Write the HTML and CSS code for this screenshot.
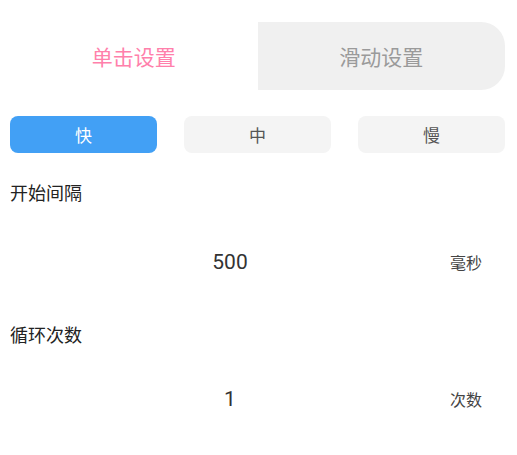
FILE: index.html
```html
<!DOCTYPE html>
<html lang="zh-CN">
<head>
<meta charset="utf-8">
<title>设置</title>
<link rel="stylesheet" href="styles.css">
</head>
<body>
<div class="page">
  <div class="tabs">
    <div class="tab tab-active">单击设置</div>
    <div class="tab tab-inactive">滑动设置</div>
  </div>
  <div class="speeds">
    <div class="speed speed-on">快</div>
    <div class="speed">中</div>
    <div class="speed">慢</div>
  </div>
  <div class="group group-first">
    <div class="label">开始间隔</div>
    <div class="value-row value-row-first">
      <div class="value">500</div>
      <div class="unit">毫秒</div>
    </div>
  </div>
  <div class="group group-second">
    <div class="label">循环次数</div>
    <div class="value-row value-row-second">
      <div class="value">1</div>
      <div class="unit">次数</div>
    </div>
  </div>
</div>
</body>
</html>
```
FILE: styles.css
```css
html, body {
  margin: 0;
  padding: 0;
  background: #ffffff;
}
body {
  font-family: "Noto Sans CJK SC", "Noto Sans", sans-serif;
}
.page {
  padding: 22px 12px 0 10px;
}
.tabs {
  display: flex;
  height: 68px;
}
.tab {
  flex: 1;
  display: flex;
  align-items: center;
  justify-content: center;
  font-size: 21px;
}
.tab-active {
  color: #ff80ab;
}
.tab-inactive {
  color: #9a9a9a;
  background: #f0f0f0;
  border-radius: 0 24px 24px 0;
}
.speeds {
  margin-top: 26px;
  display: grid;
  grid-template-columns: 1fr 1fr 1fr;
  column-gap: 27px;
}
.speed {
  height: 37px;
  border-radius: 8px;
  background: #f4f4f4;
  color: #555555;
  font-size: 17px;
  display: flex;
  align-items: center;
  justify-content: center;
}
.speed-on {
  background: #42a0f5;
  color: #ffffff;
}
.label {
  font-size: 18px;
  line-height: 24px;
  color: #222222;
}
.group-first {
  margin-top: 27px;
}
.group-second {
  margin-top: 35px;
}
.value-row {
  display: flex;
  align-items: center;
  height: 50px;
}
.value-row-first {
  margin-top: 33px;
}
.value-row-second {
  margin-top: 28px;
}
.value {
  flex: 1;
  text-align: center;
  font-family: Roboto, "Noto Sans", sans-serif;
  font-size: 21px;
  color: #333333;
}
.unit {
  width: 55px;
  font-size: 16px;
  color: #444444;
}
```
